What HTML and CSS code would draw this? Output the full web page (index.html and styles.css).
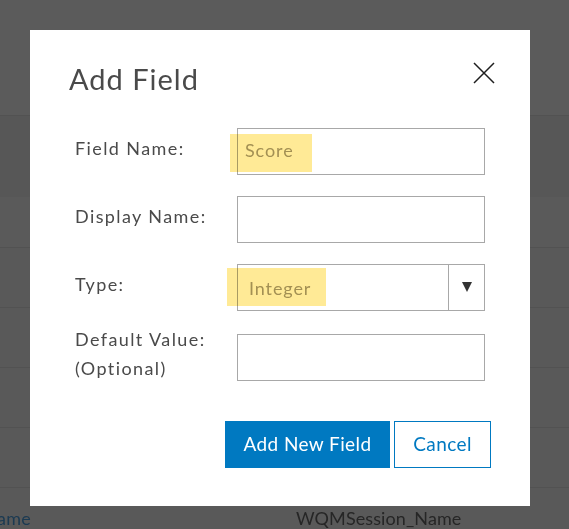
FILE: index.html
```html
<!DOCTYPE html>
<html>
<head>
<meta charset="utf-8">
<link rel="stylesheet" href="styles.css">
</head>
<body>
<div class="page">
  <div class="band band-a"></div>
  <div class="band band-b"></div>
  <div class="band band-c"></div>
  <div class="band band-d"></div>
  <div class="band band-d"></div>
  <div class="band band-d"></div>
  <div class="band band-d"></div>
  <div class="band band-last">
    <span class="cell-left">ame</span>
    <span class="cell-right">WQMSession_Name</span>
  </div>
</div>

<div class="dialog">
  <div class="dialog-head">
    <h1 class="dialog-title">Add Field</h1>
    <button class="close" aria-label="Close">
      <svg width="22" height="22" viewBox="0 0 22 22"><path d="M1 1 L21 21 M21 1 L1 21" stroke="#1e1e1e" stroke-width="1.5" fill="none"/></svg>
    </button>
  </div>
  <div class="form">
    <label class="label">Field Name:</label>
    <div class="input"><span class="val val-score">Score</span><span class="hl hl-score"></span></div>

    <label class="label">Display Name:</label>
    <div class="input"></div>

    <label class="label">Type:</label>
    <div class="input select">
      <span class="val val-int">Integer</span><span class="hl hl-int"></span>
      <span class="arrow"></span>
    </div>

    <label class="label label-two">Default Value:<br>(Optional)</label>
    <div class="input input-last"></div>
  </div>
  <div class="actions">
    <button class="btn btn-primary">Add New Field</button>
    <button class="btn btn-secondary">Cancel</button>
  </div>
</div>
</body>
</html>
```

FILE: styles.css
```css
html, body {
  margin: 0;
  padding: 0;
}
body {
  width: 569px;
  height: 529px;
  overflow: hidden;
  background: #5a5a5a;
  font-family: Lato, "Open Sans", sans-serif;
  position: relative;
}
.page {
  display: flex;
  flex-direction: column;
}
.band {
  box-sizing: border-box;
  border-bottom: 1px solid #525252;
}
.band-a { height: 116px; background: #5b5b5b; }
.band-b { height: 81px; background: #575757; border-bottom: none; }
.band-c { height: 51px; background: #5a5a5a; }
.band-d { height: 60px; background: #595959; }
.band-last {
  height: 60px;
  background: #595959;
  border-bottom: none;
  position: relative;
  font-size: 18px;
  letter-spacing: 0.1px;
}
.cell-left {
  position: absolute;
  left: -3px;
  top: 19px;
  color: #1b3a52;
  letter-spacing: 0.3px;
}
.cell-right {
  position: absolute;
  left: 296px;
  top: 19px;
  color: #262626;
}

.dialog {
  position: absolute;
  left: 30px;
  top: 30px;
  width: 500px;
  height: 476px;
  background: #fff;
  box-sizing: border-box;
  padding: 0 0 0 39px;
}
.dialog-head {
  display: flex;
  justify-content: space-between;
  align-items: flex-start;
  height: 98px;
}
.dialog-title {
  margin: 31px 0 0 0;
  font-weight: 400;
  font-size: 29px;
  line-height: 36px;
  color: #4a4a4a;
  letter-spacing: 1px;
}
.close {
  margin: 32px 35px 0 0;
  padding: 0;
  border: none;
  background: none;
  width: 22px;
  height: 22px;
  display: block;
}
.close svg { display: block; }

.form {
  display: grid;
  grid-template-columns: 162px 248px;
  row-gap: 21px;
  margin-left: 6px;
}
.label {
  font-size: 18px;
  line-height: 29px;
  color: #4a4a4a;
  align-self: center;
  margin-top: -6px;
  letter-spacing: 1.4px;
}
.label-two {
  align-self: start;
  margin-top: -7px;
  margin-bottom: -4px;
}
.input {
  box-sizing: border-box;
  height: 47px;
  border: 1px solid #a8a8a8;
  position: relative;
  display: flex;
  align-items: center;
  font-size: 18px;
}
.input-last { margin-top: 2px; }
.val {
  color: #a39d8c;
  position: relative;
  letter-spacing: 0.9px;
}
.val-score { margin-left: 7px; margin-top: -3px; }
.val-int { margin-left: 11px; margin-top: 0; }
.hl {
  position: absolute;
  background: #ffe783;
  mix-blend-mode: multiply;
  opacity: 0.85;
}
.hl-score { left: -8px; top: 5px; width: 82px; height: 38px; }
.hl-int { left: -11px; top: 3px; width: 99px; height: 38px; }
.select .arrow {
  position: absolute;
  right: 0;
  top: 0;
  bottom: 0;
  width: 35px;
  border-left: 1px solid #a8a8a8;
  display: flex;
  align-items: center;
  justify-content: center;
}
.select .arrow::before {
  content: "";
  width: 0;
  height: 0;
  border-left: 5px solid transparent;
  border-right: 5px solid transparent;
  border-top: 10px solid #333;
  margin-top: -2px;
}

.actions {
  display: flex;
  justify-content: flex-end;
  gap: 4px;
  margin: 40px 39px 0 0;
}
.btn {
  box-sizing: border-box;
  height: 47px;
  font-family: Lato, "Open Sans", sans-serif;
  font-size: 19px;
  letter-spacing: 0.4px;
  padding: 0 0 2px 0;
}
.btn-primary {
  width: 165px;
  background: #0079c1;
  color: #fff;
  border: 1px solid #0079c1;
}
.btn-secondary {
  width: 97px;
  background: #fff;
  color: #0079c1;
  border: 1px solid #0079c1;
}
```
